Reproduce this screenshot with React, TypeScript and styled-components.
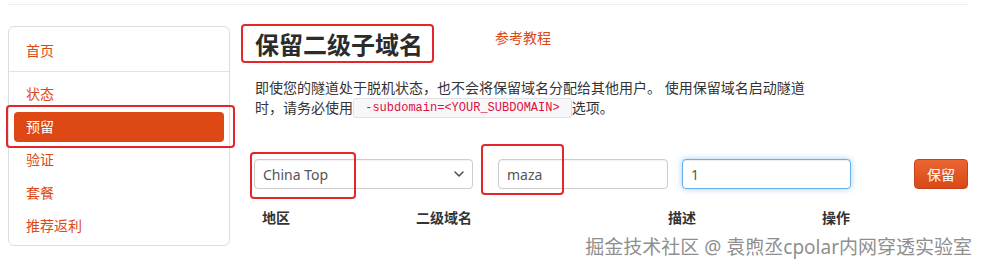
import styled, { createGlobalStyle } from "styled-components";

const GlobalStyle = createGlobalStyle`
    body {
        margin: 0;
        background: #fff;
        font-family: "Noto Sans", "Noto Sans CJK SC", sans-serif;
        font-size: 14px;
        color: #333;
    }
`;

const Page = styled.div`
    position: relative;
    width: 982px;
    height: 268px;
    overflow: hidden;
    padding: 4px 14px 0 8px;
    box-sizing: border-box;
`;

const TopRule = styled.div`
    height: 1px;
    background: #eee;
`;

const Layout = styled.div`
    display: flex;
    gap: 24px;
`;

const Sidebar = styled.nav`
    width: 222px;
    box-sizing: border-box;
    margin-top: 21px;
    border: 1px solid #ddd;
    border-radius: 6px;
    padding: 9px 5px 4px;
    display: flex;
    flex-direction: column;
`;

const NavItem = styled.a<{ $active?: boolean }>`
    position: relative;
    display: block;
    height: 30px;
    line-height: 30px;
    padding: 0 12px;
    margin-bottom: 3px;
    border-radius: 4px;
    color: ${(p) => (p.$active ? "#fff" : "#dd4814")};
    background: ${(p) => (p.$active ? "#dd4814" : "transparent")};
    text-decoration: none;
    &:last-child {
        margin-bottom: 0;
    }
`;

const NavDivider = styled.div`
    height: 1px;
    background: #e2e2e2;
    margin: 2px -5px 7px;
`;

// red annotation boxes drawn over the screenshot
const Mark = styled.span<{ $l: number; $t: number; $w: number; $h: number }>`
    position: absolute;
    left: ${(p) => p.$l}px;
    top: ${(p) => p.$t}px;
    width: ${(p) => p.$w}px;
    height: ${(p) => p.$h}px;
    border: 2.5px solid #e4262b;
    border-radius: 4px;
    box-sizing: border-box;
    pointer-events: none;
`;

const Main = styled.main`
    flex: 1;
    padding-top: 22px;
`;

const TitleRow = styled.div`
    display: flex;
    align-items: flex-start;
    gap: 72px;
`;

const Title = styled.h2`
    position: relative;
    margin: 0 0 15px 1px;
    font-size: 24px;
    line-height: 36px;
    font-weight: 700;
    color: #2b2b2b;
`;

const TutorialLink = styled.a`
    margin-top: 1px;
    line-height: 20px;
    color: #dd4814;
    text-decoration: none;
`;

const Intro = styled.p`
    margin: 0 0 41px 1px;
    max-width: 560px;
    line-height: 20px;
`;

const Code = styled.code`
    display: inline-block;
    vertical-align: top;
    box-sizing: border-box;
    height: 20px;
    font-family: "Liberation Mono", "DejaVu Sans Mono", monospace;
    font-size: 12px;
    line-height: 18px;
    white-space: pre;
    color: #d14;
    background: #f7f7f9;
    border: 1px solid #e1e1e8;
    border-radius: 3px;
    padding: 0 4px;
`;

const FormRow = styled.div`
    display: flex;
    align-items: center;
`;

const Field = styled.div<{ $w: number; $ml?: number }>`
    position: relative;
    width: ${(p) => p.$w}px;
    margin-left: ${(p) => p.$ml ?? 0}px;
`;

const Box = styled.div<{ $focus?: boolean }>`
    height: 30px;
    box-sizing: border-box;
    display: flex;
    align-items: center;
    justify-content: space-between;
    padding: 0 8px;
    border: 1px solid ${(p) => (p.$focus ? "#66afe9" : "#ccc")};
    border-radius: 4px;
    background: #fff;
    color: #555;
    font-size: 14px;
    box-shadow: ${(p) =>
        p.$focus
            ? "inset 0 1px 1px rgba(0,0,0,.075), 0 0 6px rgba(102,175,233,.6)"
            : "inset 0 1px 1px rgba(0,0,0,.05)"};
`;

const Button = styled.button`
    height: 30px;
    width: 54px;
    margin-left: 63px;
    border: 1px solid #c9431a;
    border-radius: 4px;
    background: linear-gradient(#ea6633, #d84917);
    color: #fff;
    font-family: inherit;
    font-size: 14px;
    padding: 0;
`;

const HeadRow = styled.div`
    display: grid;
    grid-template-columns: 154px 252px 154px 154px;
    margin-top: 19px;
`;

const HeadCell = styled.div`
    padding-left: 8px;
    line-height: 20px;
    font-weight: 700;
    color: #333;
`;

const Watermark = styled.div`
    position: absolute;
    right: 10px;
    top: 236px;
    font-size: 19px;
    line-height: 22px;
    white-space: nowrap;
    color: #8f8f8f;
    text-shadow: 0 0 2px #fff, 0 0 1px #fff;
`;

const Chevron = () => (
    <svg width="10" height="6" viewBox="0 0 10 6" fill="none">
        <path d="M1 1l4 4 4-4" stroke="#444" strokeWidth="1.4" strokeLinecap="round" strokeLinejoin="round" />
    </svg>
);

export default function App() {
    return (
        <Page>
            <GlobalStyle />
            <TopRule />
            <Layout>
                <Sidebar>
                    <NavItem>首页</NavItem>
                    <NavDivider />
                    <NavItem>状态</NavItem>
                    <NavItem $active>
                        预留
                        <Mark $l={-8} $t={-7} $w={229} $h={43} />
                    </NavItem>
                    <NavItem>验证</NavItem>
                    <NavItem>套餐</NavItem>
                    <NavItem>推荐返利</NavItem>
                </Sidebar>
                <Main>
                    <TitleRow>
                        <Title>
                            保留二级子域名
                            <Mark $l={-14} $t={-3} $w={193} $h={39} />
                        </Title>
                        <TutorialLink>参考教程</TutorialLink>
                    </TitleRow>
                    <Intro>
                        即使您的隧道处于脱机状态，也不会将保留域名分配给其他用户。 使用保留域名启动隧道时，请务必使用
                        <Code> -subdomain=&lt;YOUR_SUBDOMAIN&gt; </Code>选项。
                    </Intro>
                    <FormRow>
                        <Field $w={219}>
                            <Box>
                                China Top
                                <Chevron />
                            </Box>
                            <Mark $l={-4} $t={-7} $w={106} $h={47} />
                        </Field>
                        <Field $w={170} $ml={25}>
                            <Box>maza</Box>
                            <Mark $l={-17} $t={-15} $w={83} $h={51} />
                        </Field>
                        <Field $w={169} $ml={14}>
                            <Box $focus>1</Box>
                        </Field>
                        <Button>保留</Button>
                    </FormRow>
                    <HeadRow>
                        <HeadCell>地区</HeadCell>
                        <HeadCell>二级域名</HeadCell>
                        <HeadCell>描述</HeadCell>
                        <HeadCell>操作</HeadCell>
                    </HeadRow>
                </Main>
            </Layout>
            <Watermark>掘金技术社区 @ 袁煦丞cpolar内网穿透实验室</Watermark>
        </Page>
    );
}
